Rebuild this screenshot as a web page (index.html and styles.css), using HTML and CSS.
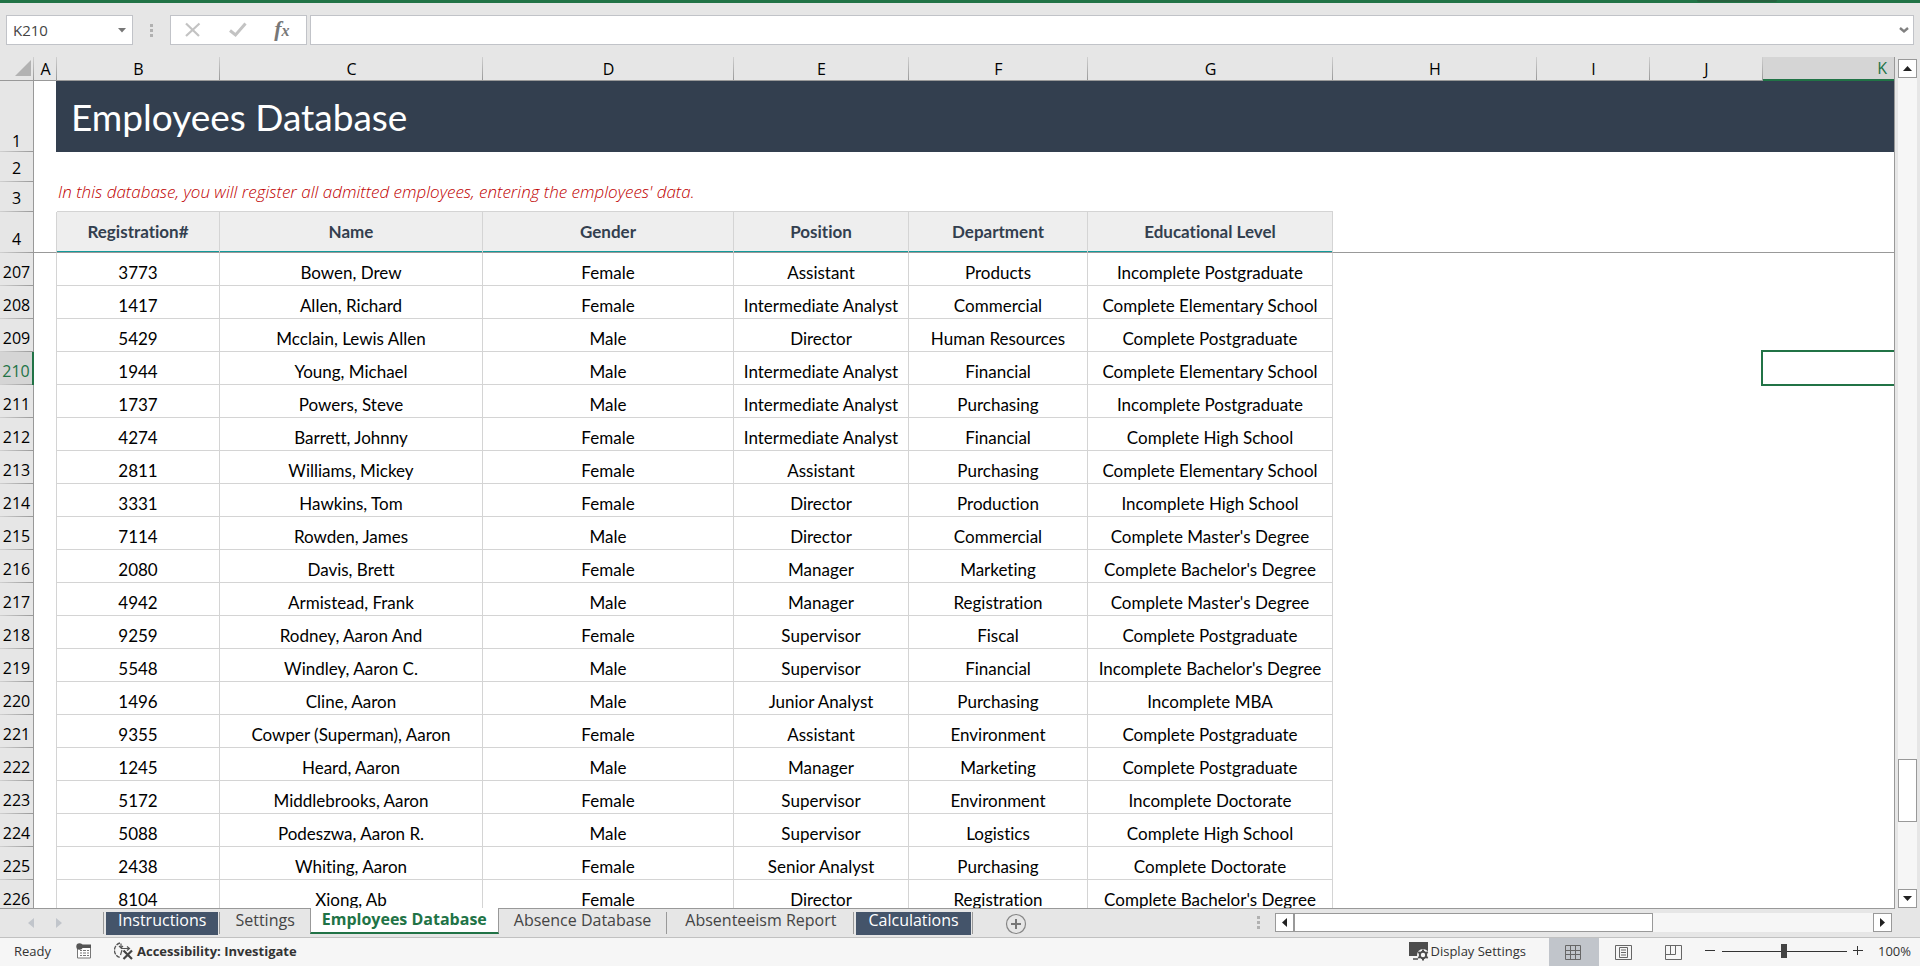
FILE: index.html
```html
<!DOCTYPE html>
<html lang="en">
<head>
<meta charset="utf-8">
<title>Employees Database</title>
<link rel="stylesheet" href="styles.css">
</head>
<body>
<div class="app">
  <div class="ribbon-edge"><span class="ribbon-shade"></span></div>

  <header class="formula-bar">
    <div class="name-box">
      <input class="name-input" type="text" value="K210" aria-label="Name box">
      <button class="bare-btn name-drop" type="button" aria-label="Open name list"><svg width="8" height="5" viewBox="0 0 8 5"><path d="M0 0h8L4 4.500z" fill="#777"/></svg></button>
    </div>
    <span class="grip"><i></i><i></i><i></i></span>
    <div class="formula-tools">
      <button class="bare-btn" type="button" aria-label="Cancel"><svg width="18" height="16" viewBox="0 0 18 16"><path d="M2 1.500 15 14M15.500 1.500 2 14" stroke="#c3c3c3" stroke-width="2.200" fill="none"/></svg></button>
      <button class="bare-btn" type="button" aria-label="Enter"><svg width="18" height="16" viewBox="0 0 18 16"><path d="M1 8.500 6.500 13 16.500 1.500" stroke="#c3c3c3" stroke-width="3" fill="none"/></svg></button>
      <button class="bare-btn fx" type="button" aria-label="Insert function">f<span class="fx-x">x</span></button>
    </div>
    <div class="formula-field">
      <input class="formula-input" type="text" aria-label="Formula">
      <button class="bare-btn formula-expand" type="button" aria-label="Expand formula bar"><svg width="10" height="7" viewBox="0 0 10 7"><path d="M1 1l4 3.500L9 1" stroke="#808080" stroke-width="2.400" fill="none"/></svg></button>
    </div>
  </header>

  <main class="workspace">
    <div class="sheet">
      <table class="grid">
        <colgroup><col class="c-row"><col class="c-a"><col class="c-b"><col class="c-c"><col class="c-d"><col class="c-e"><col class="c-f"><col class="c-g"><col class="c-h"><col class="c-i"><col class="c-j"><col class="c-k"></colgroup>
        <thead>
          <tr class="letters"><th class="corner"><svg width="16" height="16" viewBox="0 0 16 16"><path d="M16 0v16H0z" fill="#b2b2b2"/></svg></th><th>A</th><th>B</th><th>C</th><th>D</th><th>E</th><th>F</th><th>G</th><th>H</th><th>I</th><th>J</th><th class="letter-on">K</th></tr>
          <tr class="title-row"><th class="num">1</th><td class="title-edge"></td><td class="title" colspan="10"><h1>Employees Database</h1></td></tr>
          <tr class="gap-row"><th class="num">2</th><td></td><td colspan="10"></td></tr>
          <tr class="note-row"><th class="num">3</th><td></td><td class="note" colspan="6">In this database, you will register all admitted employees, entering the employees' data.</td><td colspan="4"></td></tr>
          <tr class="head-row"><th class="num">4</th><td class="edge"></td><th class="head" scope="col">Registration#</th><th class="head" scope="col">Name</th><th class="head" scope="col">Gender</th><th class="head" scope="col">Position</th><th class="head" scope="col">Department</th><th class="head" scope="col">Educational Level</th><td class="free" colspan="4"></td></tr>
        </thead>
        <tbody>
          <tr><th class="num">207</th><td class="edge"></td><td>3773</td><td>Bowen, Drew</td><td>Female</td><td>Assistant</td><td>Products</td><td>Incomplete Postgraduate</td><td class="free" colspan="3"></td><td class="free"></td></tr>
          <tr><th class="num">208</th><td class="edge"></td><td>1417</td><td>Allen, Richard</td><td>Female</td><td>Intermediate Analyst</td><td>Commercial</td><td>Complete Elementary School</td><td class="free" colspan="3"></td><td class="free"></td></tr>
          <tr><th class="num">209</th><td class="edge"></td><td>5429</td><td>Mcclain, Lewis Allen</td><td>Male</td><td>Director</td><td>Human Resources</td><td>Complete Postgraduate</td><td class="free" colspan="3"></td><td class="free"></td></tr>
          <tr><th class="num num-on">210</th><td class="edge"></td><td>1944</td><td>Young, Michael</td><td>Male</td><td>Intermediate Analyst</td><td>Financial</td><td>Complete Elementary School</td><td class="free" colspan="3"></td><td class="free active-cell"></td></tr>
          <tr><th class="num">211</th><td class="edge"></td><td>1737</td><td>Powers, Steve</td><td>Male</td><td>Intermediate Analyst</td><td>Purchasing</td><td>Incomplete Postgraduate</td><td class="free" colspan="3"></td><td class="free"></td></tr>
          <tr><th class="num">212</th><td class="edge"></td><td>4274</td><td>Barrett, Johnny</td><td>Female</td><td>Intermediate Analyst</td><td>Financial</td><td>Complete High School</td><td class="free" colspan="3"></td><td class="free"></td></tr>
          <tr><th class="num">213</th><td class="edge"></td><td>2811</td><td>Williams, Mickey</td><td>Female</td><td>Assistant</td><td>Purchasing</td><td>Complete Elementary School</td><td class="free" colspan="3"></td><td class="free"></td></tr>
          <tr><th class="num">214</th><td class="edge"></td><td>3331</td><td>Hawkins, Tom</td><td>Female</td><td>Director</td><td>Production</td><td>Incomplete High School</td><td class="free" colspan="3"></td><td class="free"></td></tr>
          <tr><th class="num">215</th><td class="edge"></td><td>7114</td><td>Rowden, James</td><td>Male</td><td>Director</td><td>Commercial</td><td>Complete Master's Degree</td><td class="free" colspan="3"></td><td class="free"></td></tr>
          <tr><th class="num">216</th><td class="edge"></td><td>2080</td><td>Davis, Brett</td><td>Female</td><td>Manager</td><td>Marketing</td><td>Complete Bachelor's Degree</td><td class="free" colspan="3"></td><td class="free"></td></tr>
          <tr><th class="num">217</th><td class="edge"></td><td>4942</td><td>Armistead, Frank</td><td>Male</td><td>Manager</td><td>Registration</td><td>Complete Master's Degree</td><td class="free" colspan="3"></td><td class="free"></td></tr>
          <tr><th class="num">218</th><td class="edge"></td><td>9259</td><td>Rodney, Aaron And</td><td>Female</td><td>Supervisor</td><td>Fiscal</td><td>Complete Postgraduate</td><td class="free" colspan="3"></td><td class="free"></td></tr>
          <tr><th class="num">219</th><td class="edge"></td><td>5548</td><td>Windley, Aaron C.</td><td>Male</td><td>Supervisor</td><td>Financial</td><td>Incomplete Bachelor's Degree</td><td class="free" colspan="3"></td><td class="free"></td></tr>
          <tr><th class="num">220</th><td class="edge"></td><td>1496</td><td>Cline, Aaron</td><td>Male</td><td>Junior Analyst</td><td>Purchasing</td><td>Incomplete MBA</td><td class="free" colspan="3"></td><td class="free"></td></tr>
          <tr><th class="num">221</th><td class="edge"></td><td>9355</td><td>Cowper (Superman), Aaron</td><td>Female</td><td>Assistant</td><td>Environment</td><td>Complete Postgraduate</td><td class="free" colspan="3"></td><td class="free"></td></tr>
          <tr><th class="num">222</th><td class="edge"></td><td>1245</td><td>Heard, Aaron</td><td>Male</td><td>Manager</td><td>Marketing</td><td>Complete Postgraduate</td><td class="free" colspan="3"></td><td class="free"></td></tr>
          <tr><th class="num">223</th><td class="edge"></td><td>5172</td><td>Middlebrooks, Aaron</td><td>Female</td><td>Supervisor</td><td>Environment</td><td>Incomplete Doctorate</td><td class="free" colspan="3"></td><td class="free"></td></tr>
          <tr><th class="num">224</th><td class="edge"></td><td>5088</td><td>Podeszwa, Aaron R.</td><td>Male</td><td>Supervisor</td><td>Logistics</td><td>Complete High School</td><td class="free" colspan="3"></td><td class="free"></td></tr>
          <tr><th class="num">225</th><td class="edge"></td><td>2438</td><td>Whiting, Aaron</td><td>Female</td><td>Senior Analyst</td><td>Purchasing</td><td>Complete Doctorate</td><td class="free" colspan="3"></td><td class="free"></td></tr>
          <tr><th class="num">226</th><td class="edge"></td><td>8104</td><td>Xiong, Ab</td><td>Female</td><td>Director</td><td>Registration</td><td>Complete Bachelor's Degree</td><td class="free" colspan="3"></td><td class="free"></td></tr>
        </tbody>
      </table>
    </div>
    <div class="vscroll">
      <button class="scroll-btn" type="button" aria-label="Scroll up"><svg width="9" height="5" viewBox="0 0 9 5"><path d="M0 5 4.500 0 9 5z" fill="#222"/></svg></button>
      <div class="vtrack"><span class="vbefore"></span><span class="vthumb"></span><span class="vafter"></span></div>
      <button class="scroll-btn" type="button" aria-label="Scroll down"><svg width="9" height="5" viewBox="0 0 9 5"><path d="M0 0 4.500 5 9 0z" fill="#222"/></svg></button>
    </div>
  </main>

  <nav class="tab-bar" aria-label="Sheets">
    <div class="tab-arrows">
      <button class="bare-btn" type="button" aria-label="Previous sheet"><svg width="6" height="10" viewBox="0 0 6 10"><path d="M6 0v10L0 5z" fill="#c1c5cb"/></svg></button>
      <button class="bare-btn" type="button" aria-label="Next sheet"><svg width="6" height="10" viewBox="0 0 6 10"><path d="M0 0v10l6-5z" fill="#c1c5cb"/></svg></button>
    </div>
    <div class="tabs">
      <span class="slot slot-first"><button class="tab tab-dark" type="button">Instructions</button></span>
      <span class="slot slot-plain"><button class="tab" type="button">Settings</button></span>
      <button class="tab tab-on" type="button">Employees Database</button>
      <span class="slot"><button class="tab tab-mid" type="button">Absence Database</button></span>
      <span class="slot"><button class="tab tab-wide" type="button">Absenteeism Report</button></span>
      <span class="slot"><button class="tab tab-dark" type="button">Calculations</button></span>
    </div>
    <button class="bare-btn add-sheet" type="button" aria-label="New sheet"><svg width="22" height="22" viewBox="0 0 22 22"><circle cx="11" cy="11" r="9.500" fill="none" stroke="#868686" stroke-width="1.200"/><path d="M11 6v10M6 11h10" stroke="#777" stroke-width="2"/></svg></button>
    <span class="grip grip-tabs"><i></i><i></i><i></i></span>
    <div class="hscroll">
      <button class="scroll-btn" type="button" aria-label="Scroll left"><svg width="5" height="9" viewBox="0 0 5 9"><path d="M5 0v9L0 4.500z" fill="#222"/></svg></button>
      <div class="htrack"><span class="hthumb"></span></div>
      <button class="scroll-btn" type="button" aria-label="Scroll right"><svg width="5" height="9" viewBox="0 0 5 9"><path d="M0 0v9l5-4.500z" fill="#222"/></svg></button>
    </div>
  </nav>

  <footer class="status-bar">
    <span class="ready">Ready</span>
    <button class="bare-btn macro" type="button" aria-label="Record macro"><svg width="16" height="16" viewBox="0 0 16 16"><path d="M1.500 5v10h13V2.500H6" fill="#fff" stroke="#777"/><path d="M6 1.500h9v3.500H6z" fill="#555"/><circle cx="3.500" cy="3.500" r="3.200" fill="#555"/><path d="M4 7.500h2m1 0h3m1 0h2M4 10h2m1 0h3m1 0h2M4 12.500h2m1 0h3m1 0h2" stroke="#777"/></svg></button>
    <button class="bare-btn access" type="button"><svg width="20" height="18" viewBox="0 0 20 18"><path d="M6 1A7.500 7.500 0 0 0 6 15.500" fill="none" stroke="#555" stroke-width="1.300" stroke-dasharray="4 1"/><path d="M7 1.500v4M5 4l2 2 2-2M7 6.500h8M13 4.500l2.500 2L13 8.500M8 8l-1.500 5" fill="none" stroke="#555" stroke-width="1.200"/><path d="m9.500 8.500 8.500 8.500M18 8.500 9.500 17" stroke="#444" stroke-width="2.200"/></svg>Accessibility: Investigate</button>
    <div class="status-right">
      <button class="bare-btn display" type="button"><svg width="20" height="20" viewBox="0 0 20 20"><path d="M0 1h19v10h-4L9 15H0z" fill="#4d4d4d"/><path d="M4 18h5" stroke="#4d4d4d" stroke-width="1.500"/><circle cx="14" cy="14" r="6" fill="#f6f6f6"/><circle cx="14" cy="14" r="3.200" fill="none" stroke="#4d4d4d" stroke-width="2"/><path d="M14 8.500v2M14 17.500v2M9.200 11.200l1.800 1M17 15.800l1.800 1M9.200 16.800l1.800-1M17 12.200l1.800-1" stroke="#4d4d4d" stroke-width="2"/></svg>Display Settings</button>
      <div class="views">
        <button class="bare-btn view view-on" type="button" aria-label="Normal view"><svg width="17" height="17" viewBox="0 0 17 17"><path d="M.5 1.500h15v14H.5zM.5 6.500h15M.5 10.500h15M5.500 1.500v14M10.500 1.500v14" fill="none" stroke="#666"/></svg></button>
        <button class="bare-btn view" type="button" aria-label="Page layout view"><svg width="17" height="17" viewBox="0 0 17 17"><path d="M.5 1.500h16v14H.5zM4.500 3.500h8v10h-8zM6 6h5M6 8.500h5M6 11h5" fill="none" stroke="#666"/></svg></button>
        <button class="bare-btn view" type="button" aria-label="Page break view"><svg width="17" height="17" viewBox="0 0 17 17"><path d="M.5 1.500h16v14H.5zM.5 10.500h10v-9M5.500 1.500v9" fill="none" stroke="#666"/></svg></button>
      </div>
      <button class="bare-btn zoom-step" type="button" aria-label="Zoom out"><svg width="10" height="10" viewBox="0 0 10 10"><path d="M0 4.500h10" stroke="#333"/></svg></button>
      <input class="zoom" type="range" min="0" max="200" value="100" aria-label="Zoom">
      <button class="bare-btn zoom-step" type="button" aria-label="Zoom in"><svg width="10" height="10" viewBox="0 0 10 10"><path d="M0 4.500h10M4.500 0v9" stroke="#333"/></svg></button>
      <button class="bare-btn percent" type="button">100%</button>
    </div>
  </footer>
</div>
</body>
</html>
```
FILE: styles.css
```css
* { box-sizing: border-box; }

body {
  margin: 0;
  background: #e6e6e6;
  color: #000;
  font-family: "Open Sans", "Noto Sans", sans-serif;
}

.app {
  display: flex;
  flex-direction: column;
  height: 100vh;
  overflow: hidden;
}

.bare-btn {
  display: flex;
  align-items: center;
  justify-content: center;
  margin: 0;
  padding: 0;
  border: 0;
  background: none;
  color: #333;
  font: inherit;
}

.ribbon-edge {
  display: flex;
  flex: none;
  justify-content: flex-end;
  height: 3px;
  padding-right: 143px;
  background: #217346;
}

.ribbon-shade {
  width: 80px;
  height: 2px;
  border-radius: 0 0 8px 8px;
  background: #26613f;
}

/* Formula bar */
.formula-bar {
  display: flex;
  flex: none;
  align-items: center;
  height: 54px;
  padding: 12px 6px;
}

.name-box,
.formula-tools,
.formula-field {
  display: flex;
  align-items: center;
  height: 30px;
  border: 1px solid #c1c3c8;
  background: #fff;
}

.name-box { width: 127px; padding-right: 6px; }

.name-input {
  flex: 1;
  min-width: 0;
  padding: 0 0 0 6px;
  border: 0;
  background: none;
  color: #444;
  font: 15px/20px "Open Sans", sans-serif;
}

.grip {
  display: flex;
  flex-direction: column;
  gap: 2px;
  margin: 0 17px;
}

.grip i { width: 3px; height: 3px; background: #b1b1b1; }

.formula-tools {
  justify-content: space-around;
  width: 137px;
  margin-right: 3px;
  padding-right: 3px;
}

.fx {
  align-items: baseline;
  color: #777;
  font: italic bold 22px/24px "Liberation Serif", serif;
}

.fx-x { font-size: 16px; }

.formula-field { flex: 1; padding-right: 4px; }

.formula-input {
  flex: 1;
  min-width: 0;
  border: 0;
  background: none;
  font: 15px/20px "Open Sans", sans-serif;
}

/* Sheet */
.workspace {
  display: flex;
  flex: 1;
  min-height: 0;
}

.sheet {
  flex: 1;
  min-width: 0;
  overflow: hidden;
  border-right: 1px solid #999;
  border-bottom: 1px solid #999;
  background: #fff;
}

.grid {
  width: 100%;
  table-layout: fixed;
  border-collapse: separate;
  border-spacing: 0;
}

.c-row { width: 34px; }
.c-a { width: 23px; }
.c-b { width: 163px; }
.c-c { width: 263px; }
.c-d { width: 251px; }
.c-e { width: 175px; }
.c-f { width: 179px; }
.c-g { width: 245px; }
.c-h { width: 204px; }
.c-i { width: 113px; }
.c-j { width: 113px; }

.grid th,
.grid td { padding: 0; }

.letters th {
  height: 24px;
  border-bottom: 1px solid #999;
  background: linear-gradient(#d0d0d0, #999) right / 1px 100% no-repeat #e6e6e6;
  font-size: 16px;
  font-weight: 400;
  line-height: 22px;
}

.letters .corner { padding: 0 3px 2px 0; text-align: right; }
.corner svg { display: block; margin-left: auto; }

.letters .letter-on {
  padding-right: 7px;
  border-bottom: 2px solid #217346;
  background: #d5d5d5;
  color: #217346;
  text-align: right;
}

.grid .num {
  padding-bottom: 5px;
  border-right: 1px solid #999;
  background: linear-gradient(90deg, #d0d0d0, #999) bottom / 100% 1px no-repeat #e6e6e6;
  font-size: 16px;
  font-weight: 400;
  line-height: 18px;
  vertical-align: bottom;
}

.grid .num-on {
  border-right: 2px solid #217346;
  background-color: #d5d5d5;
  color: #217346;
}

.title-row { height: 71px; }
.grid .title-row .num { padding-bottom: 2px; }

.title-edge { border-right: 1px solid #333f4f; }

.grid .title { padding-left: 14px; background: #333f4f; }

.title h1 {
  margin: 0;
  color: #fff;
  font: 400 37px/44px Lato, sans-serif;
}

.gap-row,
.note-row { height: 30px; }

.grid .note {
  padding: 0 0 9px 1px;
  border-bottom: 1px solid #d4d4d4;
  color: #c00000;
  font: italic 300 17px/20px "Century Gothic", "Open Sans", sans-serif;
}

.head-row { height: 41px; }

.grid .head {
  border-right: 1px solid #d4d4d4;
  border-bottom: 1px solid #999;
  background: #eee;
  box-shadow: inset 0 -1px #139a9a;
  color: #333f4f;
  font: 700 17px/20px Lato, sans-serif;
  font-variant-ligatures: none;
}

.head-row td { border-bottom: 1px solid #999; }

.grid tbody tr { height: 33px; }

.grid tbody td {
  padding-bottom: 2px;
  border-right: 1px solid #d4d4d4;
  border-bottom: 1px solid #d4d4d4;
  font: 17px/20px Lato, sans-serif;
  font-variant-ligatures: none;
  text-align: center;
  vertical-align: bottom;
}

.grid .edge { border-right: 1px solid #d4d4d4; }
.grid tbody .edge { border-bottom: 0; }
.grid tbody .free { border: 0; }

.active-cell { position: relative; }

.active-cell::after {
  content: "";
  position: absolute;
  inset: -2px 0 -1px -2px;
  border: 2px solid #217346;
  border-right: 0;
}

/* Scroll bars */
.scroll-btn {
  display: flex;
  flex: none;
  align-items: center;
  justify-content: center;
  width: 19px;
  height: 19px;
  margin: 0;
  padding: 0;
  border: 1px solid #999;
  background: #fff;
}

.vscroll {
  display: flex;
  flex-direction: column;
  padding: 2px 3px 1px;
}

.vtrack {
  display: flex;
  flex: 1;
  flex-direction: column;
  background: #f6f6f6;
}

.vbefore { flex: 681; }
.vthumb { height: 63px; border: 1px solid #999; background: #fff; }
.vafter { flex: 67; }

/* Sheet tabs */
.tab-bar {
  display: flex;
  flex: none;
  align-items: flex-start;
  height: 29px;
  border-bottom: 1px solid #c1c1c1;
}

.tab-arrows {
  display: flex;
  gap: 22px;
  width: 103px;
  padding: 9px 0 0 28px;
}

.tabs { display: flex; }

.slot {
  display: flex;
  height: 25px;
  padding: 3px 2px 0;
  background: linear-gradient(#999, #999) right 3px / 1px 22px no-repeat;
}

.slot-first {
  padding-left: 3px;
  background:
    linear-gradient(#999, #999) left 3px / 1px 22px no-repeat,
    linear-gradient(#999, #999) right 3px / 1px 22px no-repeat;
}

.slot-plain { background: none; }

.tab {
  height: 23px;
  margin: 0;
  padding: 0 13px 7px;
  border: 0;
  background: none;
  color: #444;
  font: 16px/16px "Open Sans", sans-serif;
  white-space: nowrap;
}

.tab-mid { padding: 0 14px 7px 13px; }
.tab-wide { padding: 0 16px 7px; }
.tab-dark { padding: 0 12px 7px; background: #44546a; color: #fff; }

.tab-on {
  height: 26px;
  margin-top: -1px;
  padding: 2px 11px 4px;
  border: 1px solid #999;
  border-top: 0;
  border-bottom: 2px solid #217346;
  background: #fff;
  color: #217346;
  font-weight: 700;
}

.add-sheet { margin: 4px auto 0 32px; }
.grip-tabs { margin: 7px 15px 0 0; }

.hscroll {
  display: flex;
  width: 617px;
  margin: 4px 28px 0 0;
}

.htrack { display: flex; flex: 1; background: #f6f6f6; }
.hthumb { width: 62%; border: 1px solid #999; background: #fff; }

/* Status bar */
.status-bar {
  display: flex;
  flex: none;
  align-items: center;
  height: 28px;
  padding: 0 0 2px 14px;
  background: #f6f6f6;
  color: #333;
  font-size: 13px;
  line-height: 18px;
}

.macro { margin: 0 22px 0 25px; }
.access { gap: 3px; font-weight: 700; }

.status-right {
  display: flex;
  align-items: center;
  align-self: stretch;
  margin-left: auto;
}

.display { gap: 1px; margin-right: 23px; }

.views { display: flex; align-self: stretch; margin-bottom: -2px; }
.view { width: 50px; }
.view-on { background: #c1c5cb; }

.zoom-step { margin-left: 6px; }

.zoom {
  width: 125px;
  height: 16px;
  margin: 0 0 0 7px;
  appearance: none;
  background: linear-gradient(#333, #333) center / 100% 1px no-repeat;
}

.zoom::-webkit-slider-thumb {
  appearance: none;
  width: 6px;
  height: 14px;
  background: #444;
}

.percent { margin: 0 9px 0 15px; }
```
